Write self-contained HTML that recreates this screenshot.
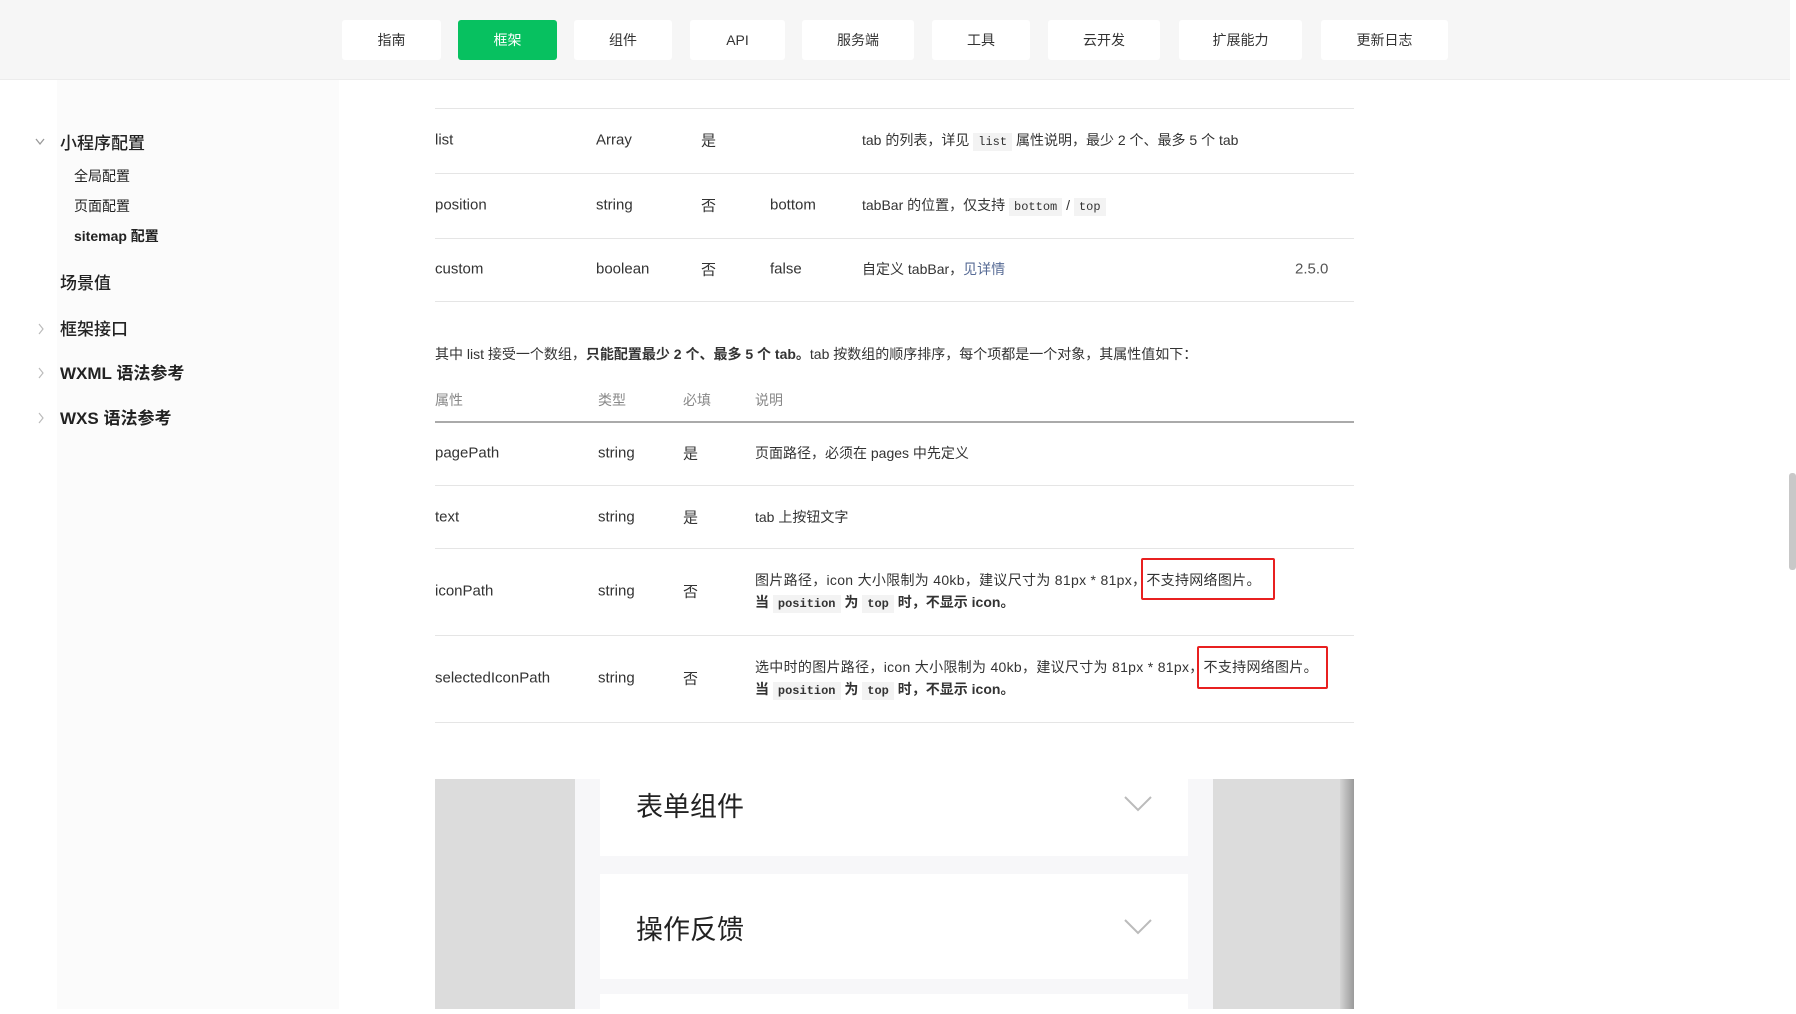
<!DOCTYPE html>
<html><head><meta charset="utf-8"><style>
*{margin:0;padding:0;box-sizing:border-box}
body{width:1796px;height:1009px;overflow:hidden;background:#fff;font-family:"Liberation Sans","Noto Sans CJK SC",sans-serif;color:#333;position:relative}
.a{position:absolute;white-space:nowrap}
.hdr{position:absolute;left:0;top:0;width:1790px;height:80px;background:#f6f6f6;border-bottom:1px solid #ececec;z-index:5}
.btn{position:absolute;top:20px;height:40px;background:#fff;border-radius:3px;font-size:14px;color:#333;text-align:center;line-height:40px}
.btn.on{background:#07c160;color:#fff}
.side{position:absolute;left:57px;top:80px;width:282px;height:929px;background:#fbfbfb}
.s1{font-size:17px;color:#222}
.s2{font-size:14px;color:#222}
.chev{position:absolute}
.line{position:absolute;left:435px;width:919px;height:1px;background:#e5e5e5}
.t{font-size:15px;color:#333;transform:translateY(-50%)}
.ls{letter-spacing:0.3px}
code{font-family:"Liberation Mono",monospace;font-size:12px;background:#f3f3f3;padding:2px 5px;color:#333;letter-spacing:0}
.red{position:absolute;border:2.5px solid #e82020;border-radius:2px}
</style></head><body>
<div class="side"></div>
<div class="hdr">
<div class="btn" style="left:342px;width:99px">指南</div>
<div class="btn on" style="left:458px;width:99px">框架</div>
<div class="btn" style="left:574px;width:98px">组件</div>
<div class="btn" style="left:690px;width:95px">API</div>
<div class="btn" style="left:802px;width:112px">服务端</div>
<div class="btn" style="left:932px;width:98px">工具</div>
<div class="btn" style="left:1048px;width:112px">云开发</div>
<div class="btn" style="left:1179px;width:123px">扩展能力</div>
<div class="btn" style="left:1321px;width:127px">更新日志</div>
</div>

<svg class="chev" style="left:35px;top:138px" width="10" height="8"><path d="M1 1 L5 6 L9 1" fill="none" stroke="#999" stroke-width="1.3"/></svg>
<div class="a s1" style="left:60px;top:129px;font-weight:500">小程序配置</div>
<div class="a s2" style="left:74px;top:166px">全局配置</div>
<div class="a s2" style="left:74px;top:196px">页面配置</div>
<div class="a s2" style="left:74px;top:226px;font-weight:700">sitemap 配置</div>
<div class="a s1" style="left:60px;top:269px;font-weight:500">场景值</div>
<svg class="chev" style="left:37px;top:323px" width="8" height="12"><path d="M2 1 L6 6 L2 11" fill="none" stroke="#bbb" stroke-width="1.2"/></svg>
<div class="a s1" style="left:60px;top:315px;font-weight:500">框架接口</div>
<svg class="chev" style="left:37px;top:367px" width="8" height="12"><path d="M2 1 L6 6 L2 11" fill="none" stroke="#bbb" stroke-width="1.2"/></svg>
<div class="a s1" style="left:60px;top:359px;font-weight:700">WXML 语法参考</div>
<svg class="chev" style="left:37px;top:412px" width="8" height="12"><path d="M2 1 L6 6 L2 11" fill="none" stroke="#bbb" stroke-width="1.2"/></svg>
<div class="a s1" style="left:60px;top:404px;font-weight:700">WXS 语法参考</div>

<div class="line" style="top:108px"></div>
<div class="a t" style="left:435px;top:140px">list</div>
<div class="a t" style="left:596px;top:140px">Array</div>
<div class="a t" style="left:701px;top:140px">是</div>
<div class="a t" style="left:862px;top:140px;font-size:14px">tab 的列表，详见 <code>list</code> 属性说明，最少 2 个、最多 5 个 tab</div>
<div class="line" style="top:173px"></div>
<div class="a t" style="left:435px;top:205px">position</div>
<div class="a t" style="left:596px;top:205px">string</div>
<div class="a t" style="left:701px;top:205px">否</div>
<div class="a t" style="left:770px;top:205px">bottom</div>
<div class="a t" style="left:862px;top:205px;font-size:14px">tabBar 的位置，仅支持 <code>bottom</code> / <code>top</code></div>
<div class="line" style="top:238px"></div>
<div class="a t" style="left:435px;top:269px">custom</div>
<div class="a t" style="left:596px;top:269px">boolean</div>
<div class="a t" style="left:701px;top:269px">否</div>
<div class="a t" style="left:770px;top:269px">false</div>
<div class="a t" style="left:862px;top:269px;font-size:14px">自定义 tabBar，<span style="color:#576b95">见详情</span></div>
<div class="a t" style="left:1295px;top:269px;color:#555">2.5.0</div>
<div class="line" style="top:301px"></div>

<div class="a t" style="left:435px;top:354px;font-size:14px">其中 list 接受一个数组，<b>只能配置最少 2 个、最多 5 个 tab。</b>tab 按数组的顺序排序，每个项都是一个对象，其属性值如下：</div>

<div class="a t" style="left:435px;top:400px;font-size:14px;color:#888">属性</div>
<div class="a t" style="left:598px;top:400px;font-size:14px;color:#888">类型</div>
<div class="a t" style="left:683px;top:400px;font-size:14px;color:#888">必填</div>
<div class="a t" style="left:755px;top:400px;font-size:14px;color:#888">说明</div>
<div class="line" style="top:421px;height:2px;background:#aaa"></div>

<div class="a t" style="left:435px;top:453px">pagePath</div>
<div class="a t" style="left:598px;top:453px">string</div>
<div class="a t" style="left:683px;top:453px">是</div>
<div class="a t" style="left:755px;top:453px;font-size:14px">页面路径，必须在 pages 中先定义</div>
<div class="line" style="top:485px"></div>
<div class="a t" style="left:435px;top:517px">text</div>
<div class="a t" style="left:598px;top:517px">string</div>
<div class="a t" style="left:683px;top:517px">是</div>
<div class="a t" style="left:755px;top:517px;font-size:14px">tab 上按钮文字</div>
<div class="line" style="top:548px"></div>
<div class="a t" style="left:435px;top:591px">iconPath</div>
<div class="a t" style="left:598px;top:591px">string</div>
<div class="a t" style="left:683px;top:591px">否</div>
<div class="a t ls" style="left:755px;top:580px;font-size:14px">图片路径，icon 大小限制为 40kb，建议尺寸为 81px * 81px，不支持网络图片。</div>
<div class="a t" style="left:755px;top:602px;font-size:14px"><b>当 <code>position</code> 为 <code>top</code> 时，不显示 icon。</b></div>
<div class="red" style="left:1141px;top:558px;width:134px;height:42px"></div>
<div class="line" style="top:635px"></div>
<div class="a t" style="left:435px;top:678px">selectedIconPath</div>
<div class="a t" style="left:598px;top:678px">string</div>
<div class="a t" style="left:683px;top:678px">否</div>
<div class="a t ls" style="left:755px;top:667px;font-size:14px">选中时的图片路径，icon 大小限制为 40kb，建议尺寸为 81px * 81px，不支持网络图片。</div>
<div class="a t" style="left:755px;top:689px;font-size:14px"><b>当 <code>position</code> 为 <code>top</code> 时，不显示 icon。</b></div>
<div class="red" style="left:1197px;top:646px;width:131px;height:43px"></div>
<div class="line" style="top:722px"></div>

<div class="a" style="left:435px;top:779px;width:919px;height:230px;background:#dcdcdc">
<div class="a" style="left:140px;top:0;width:638px;height:230px;background:#f7f7f9"></div>
<div class="a" style="left:905px;top:0;width:14px;height:230px;background:linear-gradient(90deg,#d4d4d4,#9a9a9a)"></div>
<div class="a" style="left:165px;top:0;width:588px;height:77px;background:#fff"></div>
<div class="a" style="left:165px;top:95px;width:588px;height:105px;background:#fff"></div>
<div class="a" style="left:165px;top:215px;width:588px;height:20px;background:#fff"></div>
<div class="a" style="left:201px;top:6px;font-size:27px;color:#222">表单组件</div>
<div class="a" style="left:201px;top:129px;font-size:27px;color:#222">操作反馈</div>
<svg class="a" style="left:688px;top:16px" width="30" height="18"><path d="M2 2 L15 15 L28 2" fill="none" stroke="#bbb" stroke-width="2"/></svg>
<svg class="a" style="left:688px;top:139px" width="30" height="18"><path d="M2 2 L15 15 L28 2" fill="none" stroke="#bbb" stroke-width="2"/></svg>
</div>

<div class="a" style="left:1789px;top:473px;width:7px;height:97px;background:#c8c8c8;border-radius:3px"></div>
</body></html>
